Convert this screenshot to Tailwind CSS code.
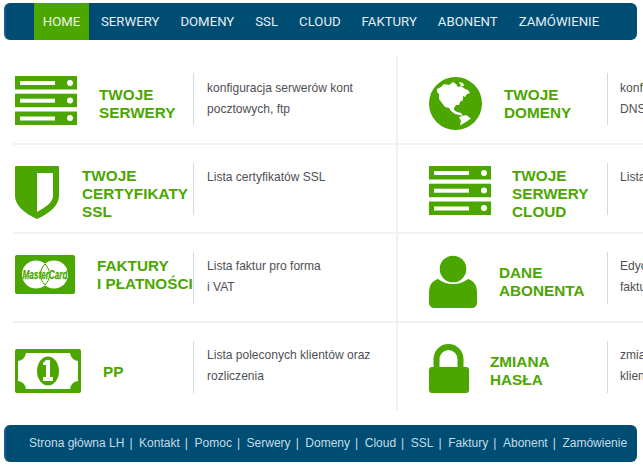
<!DOCTYPE html>
<html lang="pl">
<head>
<meta charset="utf-8">
<script src="https://cdn.jsdelivr.net/npm/@tailwindcss/browser@4"></script>
</head>
<body class="bg-white overflow-hidden font-['Liberation_Sans',sans-serif]">
<div class="w-[643px] h-[469px] overflow-hidden relative pt-[3px]">
  <nav class="mx-[4px] h-[37px] w-[633px] bg-[#004d73] rounded-[6px] flex pl-[30px] font-['Roboto',sans-serif] text-[13.2px] leading-[37px] text-[#e4eef3] border-l-2 border-[#1a5f82] box-border">
    <a class="bg-[#4ba600] text-[#eef6e6] w-[55px] text-center -ml-[2px]">HOME</a>
    <a class="ml-[12px]">SERWERY</a>
    <a class="ml-[21px]">DOMENY</a>
    <a class="ml-[21px]">SSL</a>
    <a class="ml-[21px]">CLOUD</a>
    <a class="ml-[21px]">FAKTURY</a>
    <a class="ml-[21px]">ABONENT</a>
    <a class="ml-[21px]">ZAMÓWIENIE</a>
  </nav>

  <main class="mt-[16px] ml-[13px] w-[640px] grid grid-cols-[385px_1fr] grid-rows-[89px_89px_89px_87px] text-[#4f4f55] text-[12.05px] leading-[21px]">
    <!-- row 1 left -->
    <section class="flex border-r-2 border-b-2 border-[#f0f0f5]">
      <div class="w-[180px] flex items-start shrink-0 text-[#4ba600] font-bold text-[15.3px] leading-[18px]">
        <svg class="ml-[2px] mt-[20px] shrink-0" width="62" height="49" viewBox="0 0 62 49"><g fill="#4ba600"><rect width="62" height="13.5"/><rect y="17.7" width="62" height="13.5"/><rect y="35.5" width="62" height="13.5"/></g><g fill="#fff"><rect x="5" y="5" width="35" height="4"/><rect x="5" y="22.7" width="35" height="4"/><rect x="5" y="40.5" width="35" height="4"/><circle cx="55" cy="7" r="3"/><circle cx="55" cy="24.5" r="3"/><circle cx="55" cy="42" r="3"/></g></svg>
        <h2 class="ml-[22px] mt-[30px]">TWOJE<br>SERWERY</h2>
      </div>
      <p class="border-l border-[#d8d8e2] h-[52px] mt-[17px] pl-[13px] pt-[5px] w-[190px]">konfiguracja serwerów kont pocztowych, ftp</p>
    </section>
    <!-- row 1 right -->
    <section class="flex border-b-2 border-[#f0f0f5] overflow-hidden">
      <div class="w-[209px] flex items-start shrink-0 text-[#4ba600] font-bold text-[15.3px] leading-[18px]">
        <svg class="ml-[31px] mt-[21px] shrink-0" width="53" height="53" viewBox="0 0 53 53"><circle cx="26.5" cy="26.5" r="26.5" fill="#4ba600"/><path fill="#fff" d="M8 12L12 10 15 7 20 8 24 5 27 7 29 10 32 9 36 12 39 13 41 16 38 17 36 20 34 19 34 23 31 25 30 28 27 28 25 31 25 33 28 35 32 36 34 39 30 38 26 37 22 34 20 31 16 30 13 26 10 22 10 17 8 15z"/><path fill="#fff" d="M30 40L37 38 42 41.5 37 45 31 48.5 32 44z"/><path fill="#fff" d="M30 5l4 1 1 3-3 0z"/></svg>
        <h2 class="ml-[22px] mt-[30px]">TWOJE<br>DOMENY</h2>
      </div>
      <p class="border-l border-[#d8d8e2] h-[52px] mt-[17px] pl-[12px] pt-[5px] whitespace-nowrap">konfiguracja domen<br>DNS</p>
    </section>

    <!-- row 2 left -->
    <section class="flex border-r-2 border-b-2 border-[#f0f0f5]">
      <div class="w-[180px] flex items-start shrink-0 text-[#4ba600] font-bold text-[15.3px] leading-[18px]">
        <svg class="ml-[2px] mt-[21px] shrink-0" width="44" height="53" viewBox="0 0 44 53"><path fill="#4ba600" d="M1 0h42a1 1 0 0 1 1 1v29c0 9-9 17-22 23C9 47 0 39 0 30V1a1 1 0 0 1 1-1z"/><path fill="#fff" d="M22 7h16v23c0 6-7 11-16 16z"/></svg>
        <h2 class="ml-[23px] mt-[22px]">TWOJE<br>CERTYFIKATY<br>SSL</h2>
      </div>
      <p class="border-l border-[#d8d8e2] h-[52px] mt-[18px] pl-[13px] pt-[4px]">Lista certyfikatów SSL</p>
    </section>
    <!-- row 2 right -->
    <section class="flex border-b-2 border-[#f0f0f5] overflow-hidden">
      <div class="w-[209px] flex items-start shrink-0 text-[#4ba600] font-bold text-[15.3px] leading-[18px]">
        <svg class="ml-[31px] mt-[21px] shrink-0" width="62" height="49" viewBox="0 0 62 49"><g fill="#4ba600"><rect width="62" height="13.5"/><rect y="17.7" width="62" height="13.5"/><rect y="35.5" width="62" height="13.5"/></g><g fill="#fff"><rect x="5" y="5" width="35" height="4"/><rect x="5" y="22.7" width="35" height="4"/><rect x="5" y="40.5" width="35" height="4"/><circle cx="55" cy="7" r="3"/><circle cx="55" cy="24.5" r="3"/><circle cx="55" cy="42" r="3"/></g></svg>
        <h2 class="ml-[21px] mt-[22px]">TWOJE<br>SERWERY<br>CLOUD</h2>
      </div>
      <p class="border-l border-[#d8d8e2] h-[52px] mt-[18px] pl-[12px] pt-[4px] whitespace-nowrap">Lista serwerów cloud</p>
    </section>

    <!-- row 3 left -->
    <section class="flex border-r-2 border-b-2 border-[#f0f0f5]">
      <div class="w-[180px] flex items-start shrink-0 text-[#4ba600] font-bold text-[15.3px] leading-[18px]">
        <svg class="ml-[2px] mt-[21px] shrink-0" width="60" height="39" viewBox="0 0 60 39"><rect width="60" height="39" rx="2" fill="#4ba600"/><circle cx="21" cy="19.5" r="14" fill="#fff"/><circle cx="39" cy="19.5" r="14" fill="#fff"/><path fill="none" stroke="#4ba600" d="M30 9c-6 6-6 15 0 21 6-6 6-15 0-21z"/><text x="30" y="24" text-anchor="middle" font-family="Liberation Sans" font-size="12" font-weight="700" font-style="italic" fill="#4ba600" stroke="#4ba600" stroke-width="0.25" textLength="45" lengthAdjust="spacingAndGlyphs">MasterCard</text></svg>
        <h2 class="ml-[22px] mt-[23px] whitespace-nowrap">FAKTURY<br>I PŁATNOŚCI</h2>
      </div>
      <p class="border-l border-[#d8d8e2] h-[52px] mt-[18px] pl-[13px] pt-[4px] w-[130px]">Lista faktur pro forma i VAT</p>
    </section>
    <!-- row 3 right -->
    <section class="flex border-b-2 border-[#f0f0f5] overflow-hidden">
      <div class="w-[209px] flex items-start shrink-0 text-[#4ba600] font-bold text-[15.3px] leading-[18px]">
        <svg class="ml-[31px] mt-[21px] shrink-0" width="48" height="53" viewBox="0 0 48 53"><circle cx="24" cy="14" r="13.3" fill="#4ba600"/><path fill="#4ba600" d="M9 24c4 3 9 5 15 5s11-2 15-5c6 2 9 6 9 14v9c0 4-2 6-6 6H6c-4 0-6-2-6-6v-9c0-8 3-12 9-14z"/></svg>
        <h2 class="ml-[22px] mt-[30px]">DANE<br>ABONENTA</h2>
      </div>
      <p class="border-l border-[#d8d8e2] h-[52px] mt-[18px] pl-[12px] pt-[4px] whitespace-nowrap">Edycja danych do<br>faktur</p>
    </section>

    <!-- row 4 left -->
    <section class="flex border-r-2 border-[#f0f0f5]">
      <div class="w-[180px] flex items-start shrink-0 text-[#4ba600] font-bold text-[15.3px] leading-[18px]">
        <svg class="ml-[2px] mt-[26px] shrink-0" width="66" height="44" viewBox="0 0 66 44"><rect width="66" height="44" rx="2" fill="#4ba600"/><path fill="#fff" d="M11 4a9 9 0 0 1-8 8v20a9 9 0 0 1 8 8h44a9 9 0 0 1 8-8V12a9 9 0 0 1-8-8z"/><ellipse cx="33" cy="22" rx="11" ry="14.5" fill="#4ba600"/><path fill="#fff" d="M31 11h4v17h3v4H28v-4h3V16h-3v-2z"/></svg>
        <h2 class="ml-[22px] mt-[40px]">PP</h2>
      </div>
      <p class="border-l border-[#d8d8e2] h-[52px] mt-[18px] pl-[13px] pt-[4px] w-[190px]">Lista poleconych klientów oraz rozliczenia</p>
    </section>
    <!-- row 4 right -->
    <section class="flex overflow-hidden">
      <div class="w-[209px] flex items-start shrink-0 text-[#4ba600] font-bold text-[15.3px] leading-[18px]">
        <svg class="ml-[31px] mt-[21px] shrink-0" width="40" height="49" viewBox="0 0 40 49"><path fill="none" stroke="#4ba600" stroke-width="6" d="M7.5 26V15a12 12 0 0 1 24 0v11"/><rect y="23" width="40" height="26" rx="3" fill="#4ba600"/></svg>
        <h2 class="ml-[21px] mt-[30px]">ZMIANA<br>HASŁA</h2>
      </div>
      <p class="border-l border-[#d8d8e2] h-[52px] mt-[18px] pl-[12px] pt-[4px] whitespace-nowrap">zmiana hasła<br>klienta</p>
    </section>
  </main>

  <footer class="mt-[15px] mx-[4px] h-[37px] w-[633px] bg-[#004d73] rounded-[6px] border-l-2 border-[#1a5f82] flex pl-[23px] text-[12px] leading-[36px] text-[#c3dbe7] whitespace-nowrap">
    <a>Strona główna LH</a><span class="ml-[5px] mr-[6.6px]">|</span>
    <a>Kontakt</a><span class="ml-[5px] mr-[6.6px]">|</span>
    <a>Pomoc</a><span class="ml-[5px] mr-[6.6px]">|</span>
    <a>Serwery</a><span class="ml-[5px] mr-[6.6px]">|</span>
    <a>Domeny</a><span class="ml-[5px] mr-[6.6px]">|</span>
    <a>Cloud</a><span class="ml-[5px] mr-[6.6px]">|</span>
    <a>SSL</a><span class="ml-[5px] mr-[6.6px]">|</span>
    <a>Faktury</a><span class="ml-[5px] mr-[6.6px]">|</span>
    <a>Abonent</a><span class="ml-[5px] mr-[6.6px]">|</span>
    <a>Zamówienie</a>
  </footer>
</div>
</body>
</html>
